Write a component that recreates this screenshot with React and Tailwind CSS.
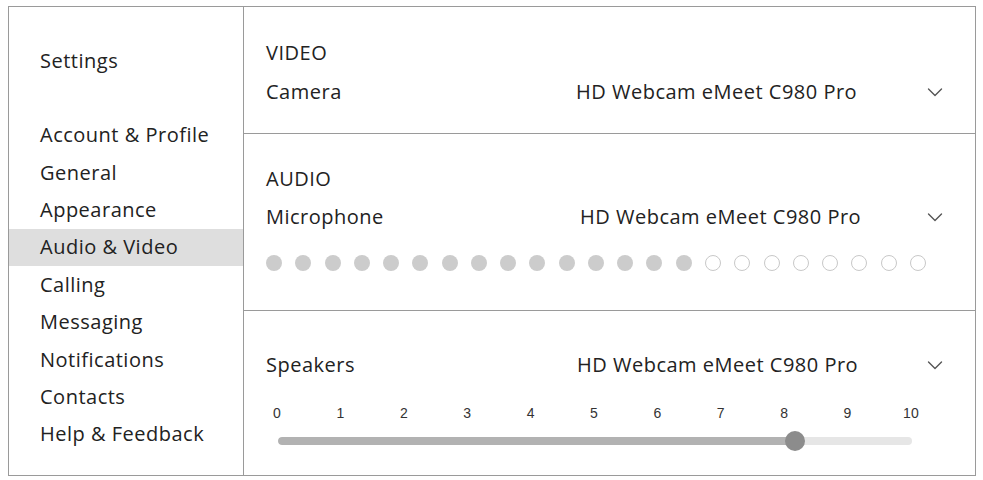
import { useState } from "react";

const menu = [
  "Account & Profile",
  "General",
  "Appearance",
  "Audio & Video",
  "Calling",
  "Messaging",
  "Notifications",
  "Contacts",
  "Help & Feedback",
];

function Chevron() {
  return (
    <svg width="16" height="10" viewBox="0 0 16 10" fill="none">
      <path d="M1.5 2L8 8.5L14.5 2" stroke="#555" strokeWidth="1.4" strokeLinecap="round" strokeLinejoin="round" />
    </svg>
  );
}

function DeviceRow({ label, value, offset }) {
  return (
    <div className="flex items-center h-[28px]">
      <div className="w-[310px] shrink-0">{label}</div>
      <div className={"flex-1 " + offset}>{value}</div>
      <div className="w-[16px] flex justify-center">
        <Chevron />
      </div>
    </div>
  );
}

export default function App() {
  const [active] = useState("Audio & Video");
  const level = 15;
  const volume = 0.816;
  const device = "HD Webcam eMeet C980 Pro";

  return (
    <div
      className="w-[983px] h-[480px] bg-white pl-[8px] pt-[6px] text-[#222] text-[20px] tracking-[0.5px]"
      style={{ fontFamily: '"Open Sans", "Liberation Sans", sans-serif' }}
    >
      <div className="w-[968px] h-[470px] border border-[#9a9a9a] flex">
        <aside className="w-[235px] shrink-0 border-r border-[#9a9a9a]">
          <div className="pt-[40px] pl-[31px] h-[68px] leading-[28px]">Settings</div>
          <ul className="mt-[41.5px]">
            {menu.map((item) => (
              <li
                key={item}
                className={
                  "h-[37.4px] flex items-center pl-[31px] " +
                  (item === active ? "bg-[#dedede]" : "")
                }
              >
                {item}
              </li>
            ))}
          </ul>
        </aside>

        <main className="flex-1 flex flex-col">
          <section className="h-[127px] border-b border-[#9a9a9a] pl-[22px] pr-[32px] pt-[32px]">
            <div className="h-[28px] leading-[28px]">VIDEO</div>
            <div className="mt-[11px]">
              <DeviceRow label="Camera" value={device} offset="pl-0" />
            </div>
          </section>

          <section className="h-[177px] border-b border-[#9a9a9a] pl-[22px] pr-[32px] pt-[31px]">
            <div className="h-[28px] leading-[28px]">AUDIO</div>
            <div className="mt-[10px]">
              <DeviceRow label="Microphone" value={device} offset="pl-[4px]" />
            </div>
            <div className="mt-[24px] w-[660px] flex justify-between">
              {Array.from({ length: 23 }).map((_, i) => (
                <span
                  key={i}
                  className={
                    "w-[16px] h-[16px] rounded-full " +
                    (i < level ? "bg-[#cccccc]" : "border border-[#c8c8c8]")
                  }
                />
              ))}
            </div>
          </section>

          <section className="flex-1 pl-[22px] pr-[32px] pt-[40px]">
            <DeviceRow label="Speakers" value={device} offset="pl-[1px]" />
            <div
              className="mt-[26px] ml-[1px] w-[654px] flex justify-between text-[14px] leading-[16px] tracking-normal text-[#333]"
              style={{ fontFamily: '"Liberation Sans", Arial, sans-serif' }}
            >
              {Array.from({ length: 11 }).map((_, i) => (
                <span key={i} className="w-[20px] text-center">
                  {i}
                </span>
              ))}
            </div>
            <div className="mt-[10px] ml-[12px] w-[634px] h-[20px] relative flex items-center">
              <div className="w-full h-[8px] rounded-full bg-[#e6e6e6] overflow-hidden">
                <div className="h-full bg-[#b2b2b2] rounded-full" style={{ width: `${volume * 100}%` }} />
              </div>
              <div
                className="absolute top-0 w-[20px] h-[20px] rounded-full bg-[#8c8c8c] -ml-[10px]"
                style={{ left: `${volume * 100}%` }}
              />
            </div>
          </section>
        </main>
      </div>
    </div>
  );
}
